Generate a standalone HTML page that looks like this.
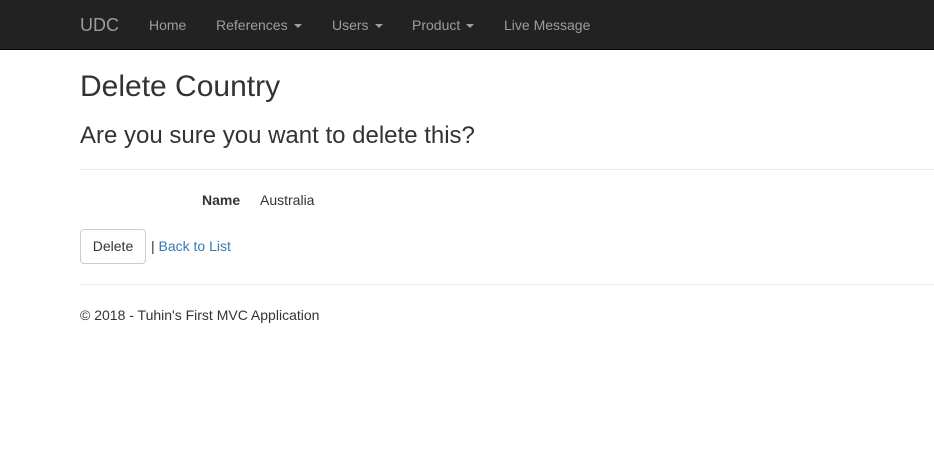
<!DOCTYPE html>
<html><head><meta charset="utf-8"><style>
body{margin:0;font-family:"Liberation Sans",Arial,sans-serif;font-size:14px;color:#333;background:#fff;width:934px;height:461px;overflow:hidden;position:relative}
.nav{position:absolute;left:0;top:0;width:934px;height:49px;background:#222;border-bottom:1px solid #080808}
.nav span{position:absolute;top:17px;color:#9d9d9d;font-size:14px;line-height:16px}
.nav .brand{font-size:18px;top:15px;line-height:20px}
.caret{display:inline-block;width:0;height:0;border-top:4px solid #9d9d9d;border-left:4px solid transparent;border-right:4px solid transparent;vertical-align:middle;margin-left:6px}
.a{position:absolute;white-space:nowrap}
hr{position:absolute;left:80px;width:854px;margin:0;border:0;border-top:1px solid #eee}
.btn{position:absolute;left:80px;top:229px;width:64px;height:33px;border:1px solid #ccc;border-radius:4px;box-sizing:content-box;text-align:center;line-height:33px;color:#333}
</style></head><body>
<div class="nav">
<span class="brand" style="left:80px">UDC</span>
<span style="left:149px">Home</span>
<span style="left:216px">References<i class="caret"></i></span>
<span style="left:332px">Users<i class="caret"></i></span>
<span style="left:412px">Product<i class="caret"></i></span>
<span style="left:504px">Live Message</span>
</div>
<div class="a" style="left:80px;top:70px;font-size:30px;line-height:33px">Delete Country</div>
<div class="a" style="left:80px;top:122px;font-size:24px;line-height:27px">Are you sure you want to delete this?</div>
<hr style="top:169px">
<div class="a" style="left:202px;top:192px;font-weight:bold">Name</div>
<div class="a" style="left:260px;top:192px">Australia</div>
<div class="btn">Delete</div>
<div class="a" style="left:151px;top:238px">| <span style="color:#337ab7">Back to List</span></div>
<hr style="top:284px">
<div class="a" style="left:80px;top:307px">© 2018 - Tuhin's First MVC Application</div>
</body></html>
